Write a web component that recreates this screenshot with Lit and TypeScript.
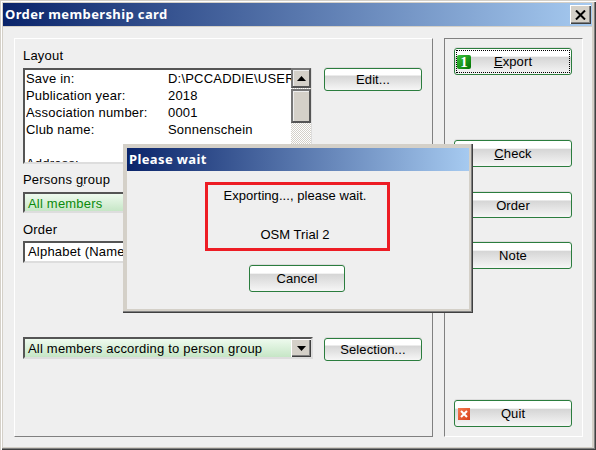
import { LitElement, html, css } from "lit";
import { customElement } from "lit/decorators.js";

@customElement("app-root")
export class AppRoot extends LitElement {
  static styles = css`
    :host { display: block; width: 596px; height: 450px; font: 13px/17px "Liberation Sans", sans-serif; letter-spacing: 0.2px; color: #000; }
    * { box-sizing: border-box; }
    .window { position: relative; width: 596px; height: 450px; background: #d4d0c8; padding: 3px 4px 3px 3px;
      box-shadow: inset 1px 1px 0 #d4d0c8, inset 2px 2px 0 #fff, inset -1px -1px 0 #404040, inset -2px -2px 0 #808080;
      display: flex; flex-direction: column; }
    .title { display: flex; align-items: center; justify-content: space-between; font-family: "Noto Sans", sans-serif; font-weight: 700; letter-spacing: 0.38px; color: #fff;
      background: linear-gradient(90deg, #0a246a, #a6caf0); padding: 0 1px 0 2px; }
    .main-title { height: 23px; flex: none; }
    .close { width: 21px; height: 19px; background: #d4d0c8; display: flex; align-items: center; justify-content: center;
      box-shadow: inset 1px 1px 0 #fff, inset -1px -1px 0 #404040, inset -2px -2px 0 #808080; }
    .close svg { display: block; }
    .body { flex: 1; margin-top: 1px; background: #efefef; display: flex; gap: 11px; padding: 11px 9px 10px 11px; }
    .left { width: 419px; height: 399px; padding: 8px 8px; border: 1px solid; border-color: #fff #808080 #808080 #fff; }
    .right { width: 139px; height: 399px; padding: 9px; border: 1px solid; border-color: #808080 #fff #fff #808080;
      display: flex; flex-direction: column; }
    .label { height: 17px; }
    .u { text-decoration: underline; }
    .top-row { display: flex; align-items: flex-start; margin-top: 4px; }
    .list { width: 289px; height: 96px; background: #fff; display: flex; margin-right: 12px; border-right: 1px solid #ddd; }
    .rows { flex: 1; min-width: 0; overflow: hidden; padding-left: 1px;
      border: solid; border-width: 2px 0 2px 2px; border-color: #555 #999 #ddd #555; }
    .row { display: grid; grid-template-columns: 142px 1fr; height: 17px; white-space: nowrap; overflow: hidden; }
    .sb { width: 20px; flex: none; display: flex; flex-direction: column;
      background: repeating-conic-gradient(#d4d0c8 0 25%, #fff 0 50%) 0 0 / 2px 2px; }
    .sb-btn { width: 20px; background: #d4d0c8; border: 2px solid; border-color: #777 #555 #555 #777; box-shadow: inset 1px 1px 0 #eee; }
    .sb-up { height: 20px; display: flex; align-items: center; justify-content: center; }
    .sb-thumb { height: 34px; margin-top: 1px; }
    .combo { width: 290px; height: 22px; margin-top: 4px; background: #fff; padding: 0 0 0 3px; white-space: nowrap; overflow: hidden;
      border: 2px solid; border-color: #555 #ddd #ddd #555; line-height: 18px; display: flex; justify-content: space-between; }
    .green { background: linear-gradient(180deg, #eefaee, #c6e6c6); line-height: 20px; }
    .persons { height: 21px; color: #0a8a0a; }
    .order-combo { margin-top: 3px; }
    .combo-btn { width: 20px; height: 18px; flex: none; background: #d4d0c8; display: flex; align-items: center; justify-content: center;
      box-shadow: inset 1px 1px 0 #fff, inset -1px -1px 0 #404040, inset -2px -2px 0 #808080; }
    .mt7 { margin-top: 7px; }
    .mt8 { margin-top: 8px; }
    .bottom-row { display: flex; gap: 11px; align-items: flex-start; margin-top: 74px; }
    .bottom-row .combo { margin-top: 0; }
    .bottom-row .btn { margin-top: 1px; }
    .btn { position: relative; display: flex; align-items: center; justify-content: center; border: 1px solid #2b7d3e; border-radius: 3px; letter-spacing: 0.1px;
      background: linear-gradient(180deg, #fff 0, #fff 28%, #d6d6d6 34%, #f6f6f6 100%); flex: none; box-shadow: 0 -1px 0 #dcdcdc; }
    .sm { width: 98px; height: 23px; }
    .side { width: 118px; height: 27px; }
    .focus { position: absolute; inset: 1px; border: 1px dotted #000; }
    .ico { position: absolute; display: flex; align-items: center; justify-content: center; }
    .one { left: 2px; top: 6px; width: 14px; height: 14px; border-radius: 2px; color: #fff; font: 700 15px/14px "Liberation Serif", serif;
      background: linear-gradient(135deg, #3cc43c, #007000); }
    .x { left: 3px; top: 7px; width: 12px; height: 12px; background: linear-gradient(135deg, #f47a50, #d8401a); }
    .check { margin-top: 65px; }
    .order { margin-top: 25px; height: 26px; }
    .note { margin-top: 24px; }
    .quit { margin-top: auto; }
    .dialog { position: absolute; left: 123px; top: 144px; width: 350px; height: 169px; background: #efefef; padding: 4px 6px 4px 4px;
      box-shadow: inset -1px -1px 0 #404040, inset -2px -2px 0 #808080, inset 0 0 0 4px #d4d0c8;
      display: flex; flex-direction: column; align-items: center; }
    .dlg-title { align-self: stretch; height: 23px; flex: none; margin-right: -2px; }
    .red { width: 185px; height: 69px; margin-top: 11px; border: 3px solid #ed1c24; display: flex; flex-direction: column; align-items: center; padding: 2px 4px 0 0; letter-spacing: 0.05px; }
    .red div + div { margin-top: 22px; }
    .cancel { width: 96px; height: 27px; margin-top: 14px; }
  `;

  private arrow(up: boolean) {
    return html`<svg width="9" height="5" viewBox="0 0 9 5"><path d=${up ? "M4.5 0L9 5H0Z" : "M0 0H9L4.5 5Z"} fill="#000"/></svg>`;
  }

  render() {
    const rows = [
      ["Save in:", "D:\\PCCADDIE\\USER"],
      ["Publication year:", "2018"],
      ["Association number:", "0001"],
      ["Club name:", "Sonnenschein"],
      ["", ""],
      ["Address:", ""],
    ];
    return html`
      <div class="window">
        <div class="title main-title">
          <span>Order membership card</span>
          <div class="close"><svg width="11" height="10" viewBox="0 0 11 10"><path d="M1 0.5L10 9.5M10 0.5L1 9.5" stroke="#000" stroke-width="2"/></svg></div>
        </div>
        <div class="body">
          <div class="left">
            <div class="label">Layout</div>
            <div class="top-row">
              <div class="list">
                <div class="rows">
                  ${rows.map((r) => html`<div class="row"><span>${r[0]}</span><span>${r[1]}</span></div>`)}
                </div>
                <div class="sb">
                  <div class="sb-btn sb-up">${this.arrow(true)}</div>
                  <div class="sb-btn sb-thumb"></div>
                </div>
              </div>
              <div class="btn sm">Edit...</div>
            </div>
            <div class="label mt7">Persons <span class="u">g</span>roup</div>
            <div class="combo green persons"><span>All members</span></div>
            <div class="label mt8">Order</div>
            <div class="combo order-combo"><span>Alphabet (Name)</span></div>
            <div class="bottom-row">
              <div class="combo green"><span>All members according to person group</span><div class="combo-btn">${this.arrow(false)}</div></div>
              <div class="btn sm">Selection...</div>
            </div>
          </div>
          <div class="right">
            <div class="btn side"><span class="focus"></span><span class="ico one">1</span><span><span class="u">E</span>xport</span></div>
            <div class="btn side check"><span><span class="u">C</span>heck</span></div>
            <div class="btn side order">Order</div>
            <div class="btn side note">Note</div>
            <div class="btn side quit"><span class="ico x"><svg width="10" height="10" viewBox="0 0 10 10"><path d="M2 2L8 8M8 2L2 8" stroke="#fff" stroke-width="2"/></svg></span>Quit</div>
          </div>
        </div>
        <div class="dialog">
          <div class="title dlg-title"><span>Please wait</span></div>
          <div class="red"><div>Exporting..., please wait.</div><div>OSM Trial 2</div></div>
          <div class="btn cancel">Cancel</div>
        </div>
      </div>
    `;
  }
}
